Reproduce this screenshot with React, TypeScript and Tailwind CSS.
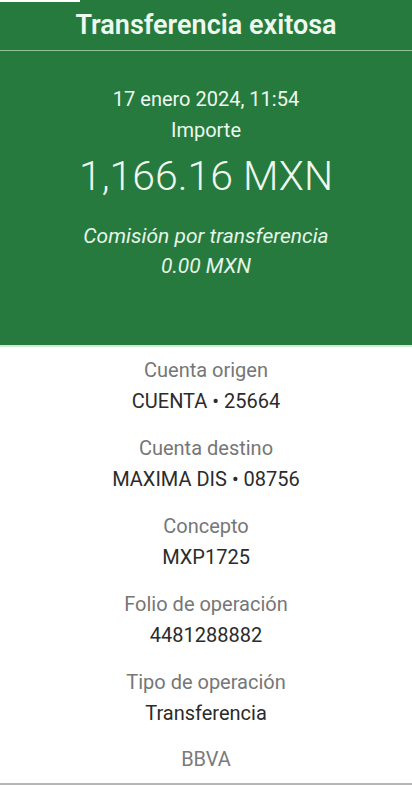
import React from "react";

const rows: [string, string][] = [
  ["Cuenta origen", "CUENTA • 25664"],
  ["Cuenta destino", "MAXIMA DIS • 08756"],
  ["Concepto", "MXP1725"],
  ["Folio de operación", "4481288882"],
  ["Tipo de operación", "Transferencia"],
];

export default function App() {
  return (
    <div
      className="w-[412px] h-[785px] bg-white flex flex-col overflow-hidden"
      style={{ fontFamily: "Roboto, 'Noto Sans', sans-serif" }}
    >
      <div className="relative bg-[#277a3e] h-[345px] flex flex-col items-center text-[#eef8ef]">
        <div className="absolute left-0 top-0 w-[80px] h-[2px] bg-white" />
        <div className="h-[51px] w-full flex items-center justify-center border-b border-[#8fc39c]">
          <span className="text-[27px] font-semibold tracking-[0px] leading-none">Transferencia exitosa</span>
        </div>
        <div className="mt-[36px] text-[20px] leading-[24px]">17 enero 2024, 11:54</div>
        <div className="mt-[7px] text-[20px] leading-[24px]">Importe</div>
        <div className="mt-[10px] text-[41px] font-light leading-[48px]">1,166.16 MXN</div>
        <div className="mt-[23px] text-[21px] italic font-normal leading-[26px] text-[#e6f5e8]">Comisión por transferencia</div>
        <div className="mt-[4px] text-[21px] italic font-normal leading-[26px] text-[#e6f5e8]">0.00 MXN</div>
      </div>
      <div className="h-[2px] bg-[#cfe8d4]" />
      <div className="flex-1 flex flex-col items-center pt-[10px]">
        {rows.map(([label, value], i) => (
          <div key={i} className="flex flex-col items-center h-[78px]">
            <div className="text-[20px] text-[#767676] leading-[24px] mt-[1px]">{label}</div>
            <div className="text-[20px] text-[#2b2b2b] leading-[24px] mt-[7px]">{value}</div>
          </div>
        ))}
        <div className="text-[20px] text-[#7a7a7a] leading-[24px] mt-[0px]">BBVA</div>
      </div>
      <div className="h-[2px] bg-[#b5b5b5]" />
    </div>
  );
}
